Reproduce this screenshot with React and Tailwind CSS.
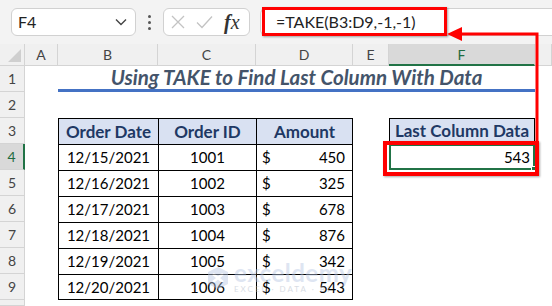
import React from 'react';

const rows = [
  ['12/15/2021', '1001', '450'],
  ['12/16/2021', '1002', '325'],
  ['12/17/2021', '1003', '678'],
  ['12/18/2021', '1004', '876'],
  ['12/19/2021', '1005', '342'],
  ['12/20/2021', '1006', '543'],
];

const rowStart = ['row-start-2', 'row-start-3', 'row-start-4', 'row-start-5', 'row-start-6', 'row-start-7', 'row-start-8', 'row-start-9', 'row-start-10', 'row-start-11'];

const cols = [
  { label: 'A', cls: 'col-start-2' },
  { label: 'B', cls: 'col-start-3' },
  { label: 'C', cls: 'col-start-4' },
  { label: 'D', cls: 'col-start-5' },
  { label: 'E', cls: 'col-start-6' },
  { label: 'F', cls: 'col-start-7', active: true },
  { label: '', cls: 'col-start-8' },
];

function Toolbar() {
  return (
    <div className="relative h-[44px] bg-[#f3f3f3] flex items-center pl-[11px] gap-0">
      {/* Name box */}
      <div className="w-[125px] h-[28px] bg-white border border-[#d1d1d1] rounded-[6px] flex items-center justify-between pl-[6px] pr-[8px]">
        <span className="text-[16px] text-[#222]">F4</span>
        <svg width="12" height="8" viewBox="0 0 12 8">
          <path d="M1 1.5 L6 6.5 L11 1.5" fill="none" stroke="#444" strokeWidth="1.4" />
        </svg>
      </div>
      {/* dots */}
      <div className="w-[27px] flex flex-col items-center gap-[3px]">
        <span className="w-[3px] h-[3px] bg-[#555] rounded-full" />
        <span className="w-[3px] h-[3px] bg-[#555] rounded-full" />
        <span className="w-[3px] h-[3px] bg-[#555] rounded-full" />
      </div>
      {/* X check fx */}
      <div className="w-[87px] h-[28px] bg-white border border-[#d1d1d1] rounded-[6px] flex items-center pl-[7px] pr-[4px] gap-[11px]">
        <svg width="14" height="14" viewBox="0 0 14 14">
          <path d="M1 1 L13 13 M13 1 L1 13" stroke="#c3c3c3" strokeWidth="1.3" />
        </svg>
        <svg width="17" height="14" viewBox="0 0 17 14">
          <path d="M1 7.5 L6 12.5 L16 1.5" fill="none" stroke="#c3c3c3" strokeWidth="1.3" />
        </svg>
        <span className="text-[20px] italic text-[#333] leading-none" style={{ fontFamily: '"Liberation Serif", serif' }}>
          <span className="font-bold">f</span>x
        </span>
      </div>
      {/* formula box */}
      <div className="ml-[10px] flex-1 h-[28px] bg-white border border-[#d1d1d1] rounded-l-[6px] border-r-0 flex items-center pl-[15px]">
        <span className="text-[16px] text-[#222]">=TAKE(B3:D9,-1,-1)</span>
      </div>
    </div>
  );
}

export default function App() {
  return (
    <div className="relative w-[552px] h-[306px] overflow-hidden bg-white" style={{ fontFamily: 'Lato, "Open Sans", sans-serif' }}>
      <Toolbar />

      <div className="grid grid-cols-[25px_33px_100px_98px_97px_36px_146px_1fr] grid-rows-[22px_repeat(9,26px)_1fr] h-[262px]">
        {/* corner */}
        <div className="col-start-1 row-start-1 bg-[#f0f0f0] border-r border-b border-[#d4d4d4] flex items-end justify-end p-[3px]">
          <div className="w-0 h-0 border-l-[13px] border-l-transparent border-b-[13px] border-b-[#cfcfcf]" />
        </div>

        {/* column headers */}
        {cols.map((c) => (
          <div
            key={c.cls}
            className={`${c.cls} row-start-1 flex items-center justify-center text-[14px] border-r border-[#d4d4d4] ${
              c.active ? 'bg-[#d9d9d9] text-[#1e6b3f] border-b-2 border-b-[#217346]' : 'bg-[#f0f0f0] text-[#444] border-b border-b-[#d4d4d4]'
            }`}
          >
            {c.label}
          </div>
        ))}

        {/* row headers */}
        {rowStart.map((r, i) => (
          <div
            key={r}
            className={`col-start-1 ${r} flex items-center justify-center text-[14px] border-b border-[#d4d4d4] ${
              i === 3 ? 'bg-[#d9d9d9] text-[#1e6b3f] border-r-2 border-r-[#217346]' : 'bg-[#f0f0f0] text-[#444] border-r border-r-[#d4d4d4]'
            }`}
          >
            {i < 9 ? i + 1 : ''}
          </div>
        ))}

        {/* title */}
        <div className="col-start-3 col-span-5 row-start-2 border-b-[3px] border-[#4472c4] flex items-center justify-center">
          <span className="text-[20.5px] font-bold italic text-[#44546a]">Using TAKE to Find Last Column With Data</span>
        </div>

        {/* table header */}
        <div className="col-start-3 row-start-4 bg-[#d9e1f2] border-t border-l border-black flex items-center justify-center text-[17px] font-bold text-[#203864]">Order Date</div>
        <div className="col-start-4 row-start-4 bg-[#d9e1f2] border-t border-l border-black flex items-center justify-center text-[17px] font-bold text-[#203864]">Order ID</div>
        <div className="col-start-5 row-start-4 bg-[#d9e1f2] border-t border-l border-r border-black flex items-center justify-center text-[17px] font-bold text-[#203864]">Amount</div>

        {/* table rows */}
        {rows.map((r, i) => {
          const rs = rowStart[i + 3];
          const last = i === rows.length - 1;
          return (
            <React.Fragment key={r[1]}>
              <div className={`col-start-3 ${rs} border-t border-l border-black ${last ? 'border-b' : ''} flex items-center justify-center text-[15px] text-black`}>{r[0]}</div>
              <div className={`col-start-4 ${rs} border-t border-l border-black ${last ? 'border-b' : ''} flex items-center justify-center text-[15px] text-black`}>{r[1]}</div>
              <div className={`col-start-5 ${rs} border-t border-l border-r border-black ${last ? 'border-b' : ''} flex items-center justify-between pl-[5px] pr-[7px] text-[15px] text-black`}>
                <span>$</span>
                <span>{r[2]}</span>
              </div>
            </React.Fragment>
          );
        })}

        {/* Last column data */}
        <div className="col-start-7 row-start-4 bg-[#d9e1f2] border border-black flex items-center justify-center text-[17px] font-bold text-[#203864]">Last Column Data</div>
        <div className="col-start-7 row-start-5 border-2 border-[#217346] flex items-center justify-end pr-[3px] text-[15px] text-black relative">
          543
          <span className="absolute -right-[3px] -bottom-[3px] w-[5px] h-[5px] bg-[#217346] border border-white" />
        </div>
      </div>

      {/* red highlight on formula */}
      <div className="absolute left-[262px] top-[7px] w-[185px] h-[29px] border-[3px] border-[#ff0000] shadow-[1px_1px_2px_rgba(0,0,0,0.35)]" />
      {/* red highlight on F4 */}
      <div className="absolute left-[383px] top-[141px] w-[156px] h-[35px] border-[4px] border-[#ff0000] shadow-[1px_1px_2px_rgba(0,0,0,0.35)]" />

      {/* arrow */}
      <svg className="absolute left-0 top-0 pointer-events-none" width="552" height="306">
        <path d="M537 141 L537 34 L458 34" fill="none" stroke="#ff0000" strokeWidth="3" />
        <path d="M447 34 L462 27 L462 41 Z" fill="#ff0000" />
      </svg>

      {/* watermark */}
      <div className="absolute left-[205px] top-[262px] flex items-center gap-[3px] opacity-45 pointer-events-none">
        <svg width="26" height="26" viewBox="0 0 26 26">
          <path d="M3 7 L13 2 L23 7 L23 19 L13 24 L3 19 Z" fill="#b8c7e4" />
          <path d="M8 9 L18 17 M18 9 L8 17" stroke="#ffffff" strokeWidth="2.5" />
        </svg>
        <div className="flex flex-col leading-none">
          <span className="text-[24px] font-bold text-[#b8c7e4] tracking-[0.5px] leading-[22px]">exceldemy</span>
          <span className="text-[8px] text-[#aab4c4] tracking-[2px] mt-[1px]">EXCEL · DATA · BI</span>
        </div>
      </div>
    </div>
  );
}
